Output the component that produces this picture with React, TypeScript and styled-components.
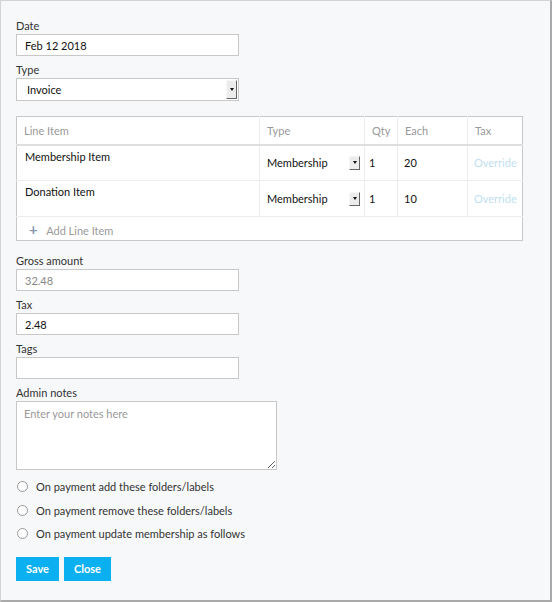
import React, { FC } from "react";
import styled, { createGlobalStyle } from "styled-components";

const GlobalStyle = createGlobalStyle`
  html, body {
    margin: 0;
    padding: 0;
  }
  body {
    font-family: Lato, "Open Sans", Arial, sans-serif;
    font-size: 11px;
    color: #333;
  }
`;

const lineItems = [
  { name: "Membership Item", type: "Membership", qty: 1, each: 20 },
  { name: "Donation Item", type: "Membership", qty: 1, each: 10 },
];

const options = [
  "On payment add these folders/labels",
  "On payment remove these folders/labels",
  "On payment update membership as follows",
];

const App: FC = () => {
  return (
    <>
      <GlobalStyle />
      <Panel>
        <Field>
          <Label>Date</Label>
          <TextInput defaultValue="Feb 12 2018" />
        </Field>

        <Field>
          <Label>Type</Label>
          <SelectBox>
            <span>Invoice</span>
            <ArrowButton />
          </SelectBox>
        </Field>

        <Table>
          <thead>
            <Row $h={28}>
              <Th style={{ width: 228 }}>Line Item</Th>
              <Th style={{ width: 90 }}>Type</Th>
              <Th style={{ width: 18 }}>Qty</Th>
              <Th style={{ width: 55 }}>Each</Th>
              <Th>Tax</Th>
            </Row>
          </thead>
          <tbody>
            {lineItems.map((item) => (
              <Row $h={36} key={item.name}>
                <NameCell>{item.name}</NameCell>
                <Td $tight>
                  <CellSelect>
                    <span>{item.type}</span>
                    <ArrowButton $small />
                  </CellSelect>
                </Td>
                <Td $tight>{item.qty}</Td>
                <Td>{item.each}</Td>
                <Td>
                  <Override>Override</Override>
                </Td>
              </Row>
            ))}
            <Row $h={24}>
              <AddCell colSpan={5}>
                <Plus>+</Plus> Add Line Item
              </AddCell>
            </Row>
          </tbody>
        </Table>

        <Field>
          <Label>Gross amount</Label>
          <TextInput $muted defaultValue="32.48" readOnly />
        </Field>
        <Field>
          <Label>Tax</Label>
          <TextInput defaultValue="2.48" />
        </Field>
        <Field>
          <Label>Tags</Label>
          <TextInput defaultValue="" />
        </Field>
        <Field>
          <Label>Admin notes</Label>
          <Notes placeholder="Enter your notes here" />
        </Field>

        <Options>
          {options.map((o) => (
            <RadioRow key={o}>
              <Radio />
              <span>{o}</span>
            </RadioRow>
          ))}
        </Options>

        <Buttons>
          <Button>Save</Button>
          <Button>Close</Button>
        </Buttons>
      </Panel>
    </>
  );
};

const Panel = styled.div`
  width: 552px;
  height: 602px;
  box-sizing: border-box;
  background: #f7f8fa;
  border-top: 1px solid #d4d4d4;
  border-left: 1px solid #d4d4d4;
  border-right: 2px solid #a9a9a9;
  border-bottom: 2px solid #a9a9a9;
  padding: 18px 0 0 15px;
  display: flex;
  flex-direction: column;
`;

const Field = styled.div`
  display: flex;
  flex-direction: column;
  gap: 1px;
  margin-bottom: 7px;
`;

const Label = styled.label`
  line-height: 14px;
  color: #333;
`;

const TextInput = styled.input<{ $muted?: boolean }>`
  width: 223px;
  height: 22px;
  box-sizing: border-box;
  border: 1px solid #c8c8c8;
  background: #fff;
  padding: 0 8px;
  font: inherit;
  font-size: 11px;
  color: ${(p) => (p.$muted ? "#888" : "#111")};
  outline: none;
`;

const SelectBox = styled.div`
  width: 223px;
  height: 23px;
  box-sizing: border-box;
  border: 1px solid #c8c8c8;
  background: #fff;
  padding: 0 1px 0 10px;
  display: flex;
  align-items: center;
  justify-content: space-between;
  color: #111;
`;

const ArrowButton = styled.span<{ $small?: boolean }>`
  width: 11px;
  height: ${(p) => (p.$small ? "14px" : "19px")};
  box-sizing: border-box;
  background: #ececec;
  border-top: 1px solid #f7f7f7;
  border-left: 1px solid #f7f7f7;
  border-right: 1px solid #666;
  border-bottom: 1px solid #666;
  display: flex;
  align-items: center;
  justify-content: center;
  &::after {
    content: "";
    border-left: 2.5px solid transparent;
    border-right: 2.5px solid transparent;
    border-top: 3px solid #111;
  }
`;

const Table = styled.table`
  margin-top: 8px;
  margin-bottom: 13px;
  width: 507px;
  border-collapse: collapse;
  border: 1px solid #c8c8c8;
  background: #fff;
  table-layout: fixed;
`;

const Row = styled.tr<{ $h: number }>`
  height: ${(p) => p.$h}px;
`;

const Th = styled.th`
  text-align: left;
  font-weight: normal;
  color: #999;
  padding: 0 7px;
  border-left: 1px solid #ececec;
  border-bottom: 2px solid #dedede;
  &:first-child {
    border-left: none;
  }
`;

const Td = styled.td<{ $tight?: boolean }>`
  padding: 0 ${(p) => (p.$tight ? "4px" : "6px")};
  border-left: 1px solid #ececec;
  border-bottom: 1px solid #ececec;
  color: #111;
  vertical-align: middle;
`;

const NameCell = styled.td`
  padding: 4px 8px 0;
  vertical-align: top;
  border-bottom: 1px solid #ececec;
  color: #111;
`;

const CellSelect = styled.div`
  display: flex;
  align-items: center;
  justify-content: space-between;
  padding-left: 3px;
`;

const Override = styled.span`
  color: #bfe0f2;
`;

const AddCell = styled.td`
  padding: 0 12px;
  color: #9a9a9a;
`;

const Plus = styled.span`
  color: #8898ad;
  font-size: 15px;
  font-weight: bold;
  margin-right: 6px;
`;

const Notes = styled.textarea`
  width: 261px;
  height: 69px;
  box-sizing: border-box;
  border: 1px solid #c8c8c8;
  background: #fff;
  padding: 5px 7px;
  font: inherit;
  font-size: 11px;
  resize: both;
  outline: none;
  &::placeholder {
    color: #999;
  }
`;

const Options = styled.div`
  margin-top: -2px;
  display: flex;
  flex-direction: column;
`;

const RadioRow = styled.div`
  display: flex;
  align-items: center;
  gap: 8px;
  height: 23.5px;
  color: #333;
`;

const Radio = styled.span`
  width: 11px;
  height: 11px;
  box-sizing: border-box;
  border: 1px solid #9a9a9a;
  border-radius: 50%;
  background: #fff;
  margin-left: 1px;
`;

const Buttons = styled.div`
  margin-top: 11px;
  display: flex;
  gap: 5px;
`;

const Button = styled.button`
  height: 24px;
  padding: 0 10px;
  border: none;
  background: #0ab0f0;
  color: #fff;
  font: inherit;
  font-size: 11px;
  font-weight: bold;
  cursor: pointer;
`;

export default App;
